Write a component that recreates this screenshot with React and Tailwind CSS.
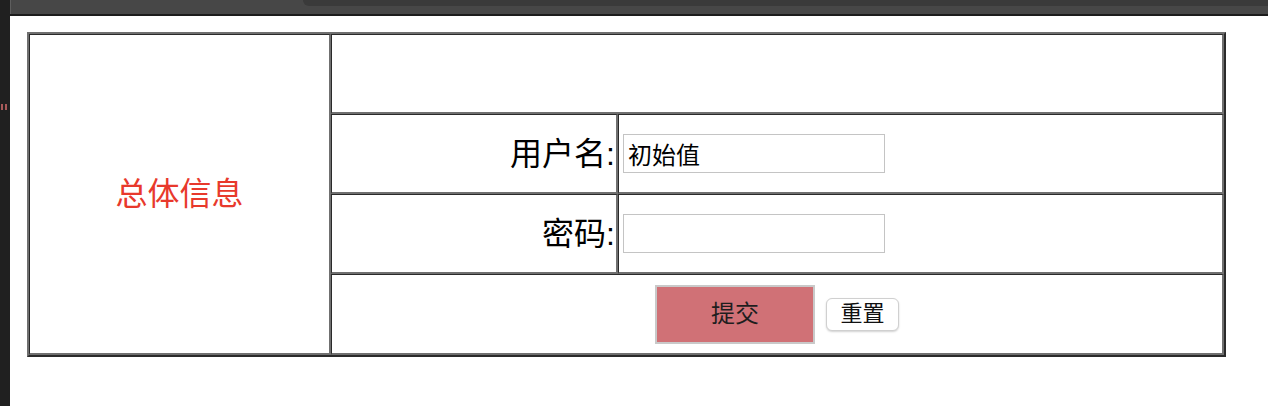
import React from "react";

const FormTable = () => {
  return (
    <table className="w-[1199px] table-fixed border-separate border-spacing-0 border-2 border-t-[#6f6f6f] border-l-[#6f6f6f] border-r-[#2a2a2a] border-b-[#2a2a2a]">
      <colgroup>
        <col className="w-[302px]" />
        <col className="w-[287px]" />
        <col />
      </colgroup>
      <tbody>
        <tr className="h-[80px]">
          <td
            rowSpan={4}
            className="border-t border-l border-r-2 border-b-2 border-t-[#2a2a2a] border-l-[#2a2a2a] border-r-[#707070] border-b-[#707070] text-center align-middle text-[32px] text-[#e8392c]"
          >
            总体信息
          </td>
          <td
            colSpan={2}
            className="border-t border-l border-r-2 border-b-2 border-t-[#2a2a2a] border-l-[#2a2a2a] border-r-[#707070] border-b-[#707070]"
          ></td>
        </tr>
        <tr className="h-[80px]">
          <td className="border-t border-l border-r-2 border-b-2 border-t-[#2a2a2a] border-l-[#2a2a2a] border-r-[#707070] border-b-[#707070] text-right align-middle pr-[1px] text-[32px] text-black">
            用户名:
          </td>
          <td className="border-t border-l border-r-2 border-b-2 border-t-[#2a2a2a] border-l-[#2a2a2a] border-r-[#707070] border-b-[#707070] align-middle pl-[4px]">
            <div className="flex items-center">
              <input
                type="text"
                defaultValue="初始值"
                className="w-[262px] h-[39px] border border-[#c4c4c4] px-[4px] text-[24px] text-black outline-none"
              />
            </div>
          </td>
        </tr>
        <tr className="h-[80px]">
          <td className="border-t border-l border-r-2 border-b-2 border-t-[#2a2a2a] border-l-[#2a2a2a] border-r-[#707070] border-b-[#707070] text-right align-middle pr-[1px] text-[32px] text-black">
            密码:
          </td>
          <td className="border-t border-l border-r-2 border-b-2 border-t-[#2a2a2a] border-l-[#2a2a2a] border-r-[#707070] border-b-[#707070] align-middle pl-[4px]">
            <div className="flex items-center">
              <input
                type="password"
                className="w-[262px] h-[39px] border border-[#c4c4c4] px-[4px] text-[24px] text-black outline-none"
              />
            </div>
          </td>
        </tr>
        <tr className="h-[81px]">
          <td
            colSpan={2}
            className="border-t border-l border-r-2 border-b-2 border-t-[#2a2a2a] border-l-[#2a2a2a] border-r-[#707070] border-b-[#707070] align-middle"
          >
            <div className="flex items-center justify-center gap-[11px]">
              <button className="w-[160px] h-[59px] bg-[#d07176] border-2 border-[#c9c9c9] text-[24px] text-[#1e1e1e]">
                提交
              </button>
              <button className="w-[73px] h-[33px] bg-white border border-[#d0d0d0] rounded-[6px] shadow-[0_1px_2px_rgba(0,0,0,0.18)] text-[22px] leading-none text-[#111]">
                重置
              </button>
            </div>
          </td>
        </tr>
      </tbody>
    </table>
  );
};

const App = () => {
  return (
    <div className="w-[1268px] h-[406px] flex bg-white overflow-hidden font-['Liberation_Sans','Noto_Sans_CJK_SC',sans-serif]">
      {/* left dark strip */}
      <div className="w-[10px] h-full bg-[#202020] flex flex-col">
        <div className="mt-[104px] flex gap-[2px] pl-[1px]">
          <span className="w-[2px] h-[6px] bg-[#a85a5a]" />
          <span className="w-[2px] h-[6px] bg-[#a85a5a]" />
        </div>
      </div>
      <div className="flex-1 flex flex-col">
        {/* top chrome */}
        <div className="h-[14px] bg-[#474747] border-l border-[#5e5e5e] flex">
          <div className="w-[292px]" />
          <div className="flex-1 h-[6px] bg-[#3a3a3a] rounded-bl-[14px]" />
        </div>
        <div className="h-[2px] bg-[#1c1c1c]" />
        <div className="pl-[17px] pt-[16px]">
          <FormTable />
        </div>
      </div>
    </div>
  );
};

export default App;
